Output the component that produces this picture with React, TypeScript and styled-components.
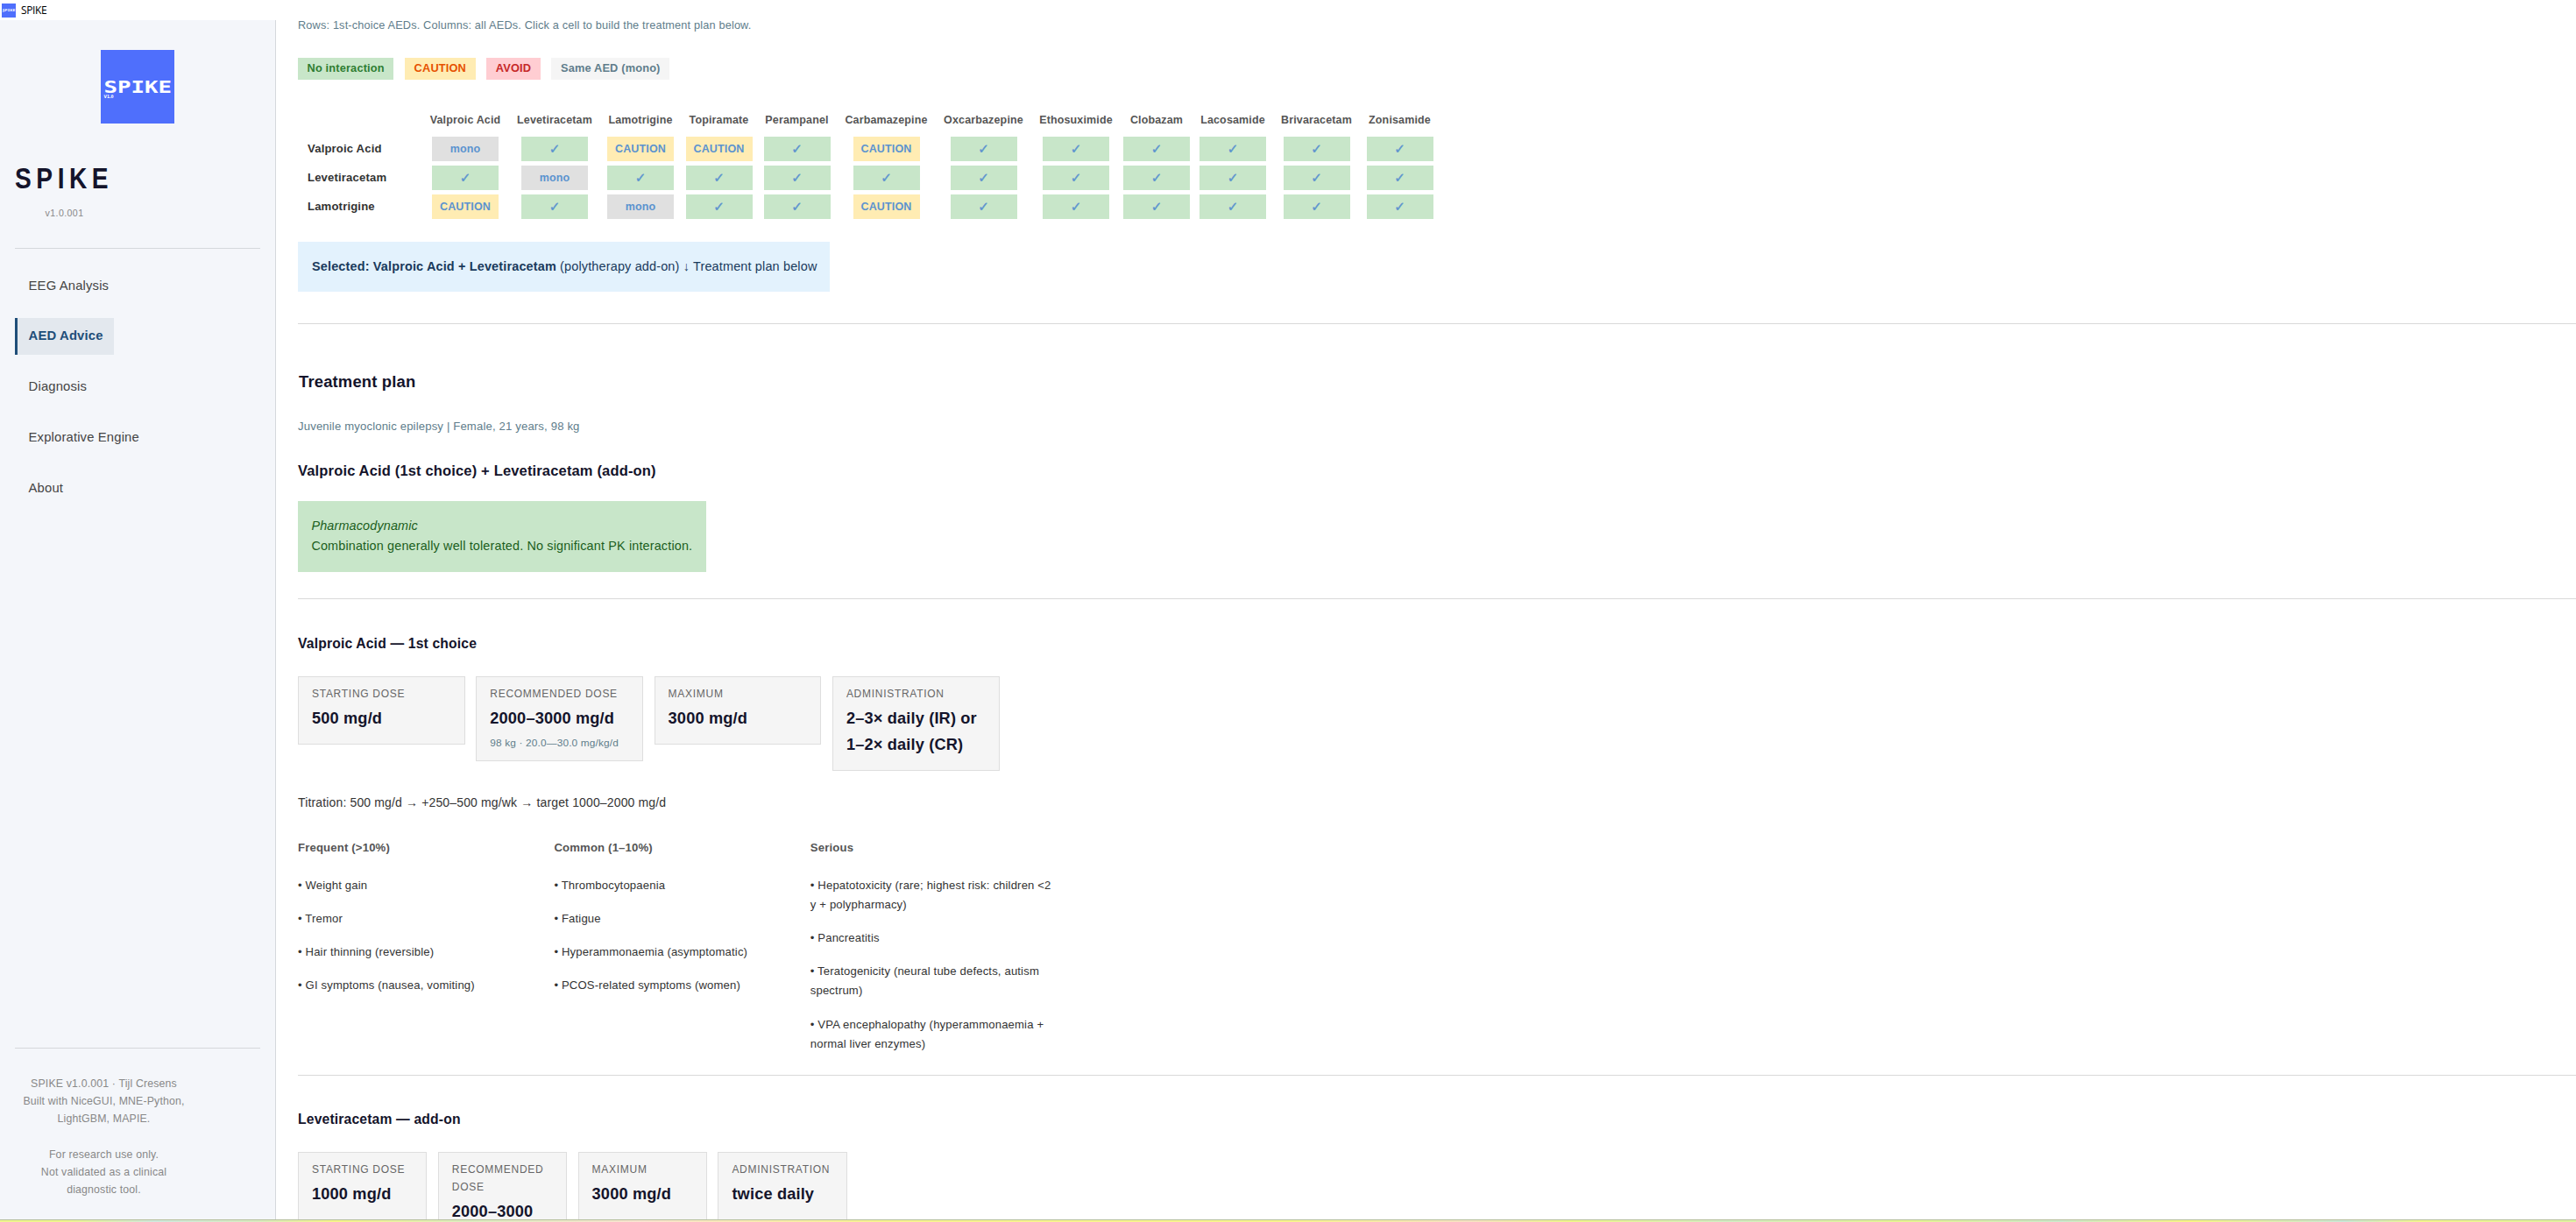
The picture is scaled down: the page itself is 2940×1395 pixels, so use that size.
import styled, { createGlobalStyle, css } from "styled-components";

const COLORS = {
	ink: "#14142b",
	text: "#333333",
	muted: "#607d8b",
	grey: "#888888",
	line: "#d5d8dc",
	navy: "#1f4e79",
	link: "#5b93cf",
	sidebar: "#f4f6fa",
};

const TONES = {
	ok: { bg: "#c8e6c9", fg: "#2e7d32" },
	caution: { bg: "#ffecb3", fg: "#e65100" },
	avoid: { bg: "#ffcdd2", fg: "#c62828" },
	same: { bg: "#f5f5f5", fg: "#607d8b" },
	mono: { bg: "#e0e0e0", fg: "#607d8b" },
};

type Tone = keyof typeof TONES;

const GlobalStyle = createGlobalStyle`
	* {
		box-sizing: border-box;
	}

	body {
		margin: 0;
		background: #ffffff;
		color: ${COLORS.text};
		font-family: "Liberation Sans", Arial, sans-serif;
		font-size: 16px;
		letter-spacing: 0.16px;
	}
`;

const Window = styled.div`
	display: flex;
	flex-direction: column;
	height: 1395px;
	overflow: hidden;
`;

const TitleBar = styled.header`
	display: flex;
	align-items: center;
	gap: 6px;
	flex: none;
	height: 23px;
	padding-left: 2px;
	font-family: "Open Sans", "Noto Sans", sans-serif;
	font-size: 12px;
	letter-spacing: -0.4px;
	color: #000000;
`;

const Body = styled.div`
	display: flex;
	flex: none;
	height: 1369px;
	overflow: hidden;
`;

const BottomStrip = styled.div`
	flex: none;
	height: 3px;
	border-top: 1px solid #b5bf9c;
	background: linear-gradient(
		90deg,
		#eef58c 0%,
		#eef58c 2.5%,
		#cfe8dc 6%,
		#d8ebc0 10%,
		#f6f488 13%,
		#dcedc0 18%,
		#fae3d0 25%,
		#f7f290 34%,
		#f8f48c 50%,
		#f6e0c4 57%,
		#eef58a 61%,
		#d2ecc4 67%,
		#e6f490 74%,
		#cbe8cd 80%,
		#f8f484 85%,
		#c9e7d6 91%,
		#f3f58c 94%,
		#dff2a0 100%
	);
`;

const Sidebar = styled.aside`
	display: flex;
	flex-direction: column;
	flex: none;
	width: 315px;
	padding: 34px 17px 0;
	background: ${COLORS.sidebar};
	border-right: 1px solid ${COLORS.line};
`;

const LogoWrap = styled.div`
	align-self: center;
	width: 84px;
	height: 84px;
`;

const Brand = styled.div`
	width: 130px;
	margin-top: 44px;
	height: 38px;
	line-height: 38px;
	font-size: 33.5px;
	font-weight: 700;
	letter-spacing: 6.6px;
	color: ${COLORS.ink};
	transform: scaleX(0.84);
	transform-origin: left;
`;

const Version = styled.div`
	width: 112px;
	margin-top: 10px;
	padding-left: 1px;
	line-height: 20px;
	font-size: 10.6px;
	letter-spacing: 0.4px;
	text-align: center;
	color: ${COLORS.grey};
`;

const SideRule = styled.div`
	height: 1px;
	background: ${COLORS.line};
`;

const VersionRule = styled(SideRule)`
	margin-top: 30px;
`;

const Nav = styled.nav`
	display: flex;
	flex-direction: column;
	align-items: flex-start;
	flex: 1;
	gap: 16px;
	margin-top: 21.5px;
`;

const NavItem = styled.a<{ $active?: boolean }>`
	padding: 8px 12.8px 8px 12.6px;
	border-left: 3px solid transparent;
	line-height: 25.8px;
	font-size: 14.8px;
	color: #444444;

	${({ $active }) =>
		$active &&
		css`
			border-left-color: ${COLORS.navy};
			background: #e3e8ee;
			color: ${COLORS.navy};
			font-weight: 700;
		`}
`;

const Footer = styled.div`
	width: 203px;
	padding-top: 29.5px;
	height: 195px;
	line-height: 20.33px;
	font-size: 12.32px;
	text-align: center;
	color: ${COLORS.grey};
`;

const Main = styled.main`
	flex: 1;
	padding-left: 25px;
	margin-top: -5px;
`;

const Caption = styled.p<{ $size?: number }>`
	margin: 0;
	line-height: 22px;
	font-size: ${({ $size }) => $size ?? 12.74}px;
	color: ${COLORS.muted};
`;

const Legend = styled.div`
	display: flex;
	gap: 12.8px;
	margin: 26px 0 28px;
`;

const LegendChip = styled.span<{ $tone: Tone }>`
	height: 25px;
	padding: 0 10.5px;
	line-height: 24px;
	font-size: 12.8px;
	font-weight: 700;
	background: ${({ $tone }) => TONES[$tone].bg};
	color: ${({ $tone }) => TONES[$tone].fg};
`;

const Matrix = styled.div`
	display: grid;
	grid-template-columns: 141px 100px 104px 92px 87px 91px 113px 109px 102px 82px 92px 99px 91px;
	grid-template-rows: 32px repeat(3, 28px);
	align-items: center;
	row-gap: 5px;
	margin-bottom: 26px;
`;

const ColHead = styled.div`
	padding-top: 4px;
	text-align: center;
	white-space: nowrap;
	font-size: 12.48px;
	font-weight: 700;
	color: #555555;
`;

const RowHead = styled.div`
	padding: 0 0 1px 11px;
	font-size: 13.12px;
	font-weight: 700;
	color: ${COLORS.text};
`;

const Cell = styled.div<{ $tone: Tone }>`
	display: flex;
	align-items: center;
	justify-content: center;
	justify-self: center;
	width: 76px;
	height: 28px;
	padding-bottom: 1px;
	font-size: 12.5px;
	font-weight: 700;
	background: ${({ $tone }) => TONES[$tone].bg};
	color: ${COLORS.link};
`;

const Check = styled.span`
	padding-top: 2px;
	font-family: "DejaVu Sans", sans-serif;
	font-size: 15px;
	line-height: 1;
	-webkit-text-stroke: 0.4px ${COLORS.link};
`;

const Selected = styled.div`
	width: 607px;
	height: 57px;
	padding-left: 16px;
	line-height: 56px;
	white-space: nowrap;
	font-size: 14.44px;
	background: #e3f2fd;
	color: #1a3a5c;
`;

const Rule = styled.div<{ $top: number; $bottom: number }>`
	height: 1px;
	margin: ${({ $top, $bottom }) => `${$top}px 0 ${$bottom}px`};
	background: #d9d9d9;
`;

const PageTitle = styled.h2`
	margin: 0 0 24px 1px;
	line-height: 32px;
	font-size: 18.45px;
	font-weight: 700;
	color: ${COLORS.ink};
`;

const ComboTitle = styled.h3`
	margin: 25px 0 21px;
	line-height: 28px;
	font-size: 16.5px;
	font-weight: 700;
	color: ${COLORS.ink};
`;

const Interaction = styled.div`
	width: 466px;
	height: 81px;
	padding: 16.5px 15.4px;
	line-height: 23px;
	white-space: nowrap;
	font-size: 14.4px;
	background: ${TONES.ok.bg};
	color: #1b5e20;
`;

const DrugTitle = styled.h4`
	margin: 0;
	line-height: 26px;
	font-size: 15.7px;
	font-weight: 700;
	color: ${COLORS.ink};
`;

const DoseRow = styled.div<{ $cardWidth: number }>`
	display: grid;
	grid-template-columns: repeat(4, ${({ $cardWidth }) => $cardWidth}px);
	align-items: start;
	gap: 12.5px;
	padding-top: 24px;
`;

const DoseCard = styled.div`
	padding: 9px 15px 10.2px;
	border: 1px solid #dedede;
	background: #f5f5f5;
`;

const DoseLabel = styled.div`
	line-height: 20px;
	font-size: 12px;
	letter-spacing: 0.72px;
	text-transform: uppercase;
	color: #666666;
`;

const DoseValue = styled.div`
	margin: 3.2px 0;
	line-height: 30px;
	font-size: 18.2px;
	font-weight: 700;
	color: ${COLORS.ink};
`;

const DoseNote = styled.div`
	margin-top: -0.6px;
	line-height: 20.2px;
	white-space: nowrap;
	font-size: 11.84px;
	color: ${COLORS.muted};
`;

const Titration = styled.p`
	margin: 24px 0 29px;
	line-height: 24px;
	font-size: 13.98px;
	color: ${COLORS.text};
`;

const Effects = styled.div`
	display: grid;
	grid-template-columns: repeat(3, 279.6px);
	gap: 12.8px;
`;

const EffectColumn = styled.div`
	display: flex;
	flex-direction: column;
	gap: 16.1px;
`;

const EffectHead = styled.div`
	margin-bottom: 4.6px;
	line-height: 22.1px;
	font-size: 13.15px;
	font-weight: 700;
	color: #555555;
`;

const Effect = styled.div`
	line-height: 22.1px;
	font-size: 13.1px;
	color: ${COLORS.text};
`;

// fixed height so the titration line does not depend on the tallest card
const DoseBlock = styled.div`
	height: 132px;
`;

const EffectBlock = styled.div`
	height: 234.5px;
`;

const NAV = ["EEG Analysis", "AED Advice", "Diagnosis", "Explorative Engine", "About"];

const DRUGS = [
	"Valproic Acid",
	"Levetiracetam",
	"Lamotrigine",
	"Topiramate",
	"Perampanel",
	"Carbamazepine",
	"Oxcarbazepine",
	"Ethosuximide",
	"Clobazam",
	"Lacosamide",
	"Brivaracetam",
	"Zonisamide",
];

// pairs that need caution, keyed by row
const CAUTIONS: Record<string, string[]> = {
	"Valproic Acid": ["Lamotrigine", "Topiramate", "Carbamazepine"],
	Levetiracetam: [],
	Lamotrigine: ["Valproic Acid", "Carbamazepine"],
};

const LEGEND: { tone: Tone; label: string }[] = [
	{ tone: "ok", label: "No interaction" },
	{ tone: "caution", label: "CAUTION" },
	{ tone: "avoid", label: "AVOID" },
	{ tone: "same", label: "Same AED (mono)" },
];

const VPA_DOSES = [
	{ label: "Starting dose", value: "500 mg/d" },
	{ label: "Recommended dose", value: "2000–3000 mg/d", note: "98 kg · 20.0—30.0 mg/kg/d" },
	{ label: "Maximum", value: "3000 mg/d" },
	{ label: "Administration", value: "2–3× daily (IR) or 1–2× daily (CR)" },
];

const LEV_DOSES = [
	{ label: "Starting dose", value: "1000 mg/d" },
	{ label: "Recommended dose", value: "2000–3000 mg/d" },
	{ label: "Maximum", value: "3000 mg/d" },
	{ label: "Administration", value: "twice daily" },
];

const EFFECTS = [
	{
		title: "Frequent (>10%)",
		items: ["Weight gain", "Tremor", "Hair thinning (reversible)", "GI symptoms (nausea, vomiting)"],
	},
	{
		title: "Common (1–10%)",
		items: [
			"Thrombocytopaenia",
			"Fatigue",
			"Hyperammonaemia (asymptomatic)",
			"PCOS-related symptoms (women)",
		],
	},
	{
		title: "Serious",
		items: [
			"Hepatotoxicity (rare; highest risk: children <2 y + polypharmacy)",
			"Pancreatitis",
			"Teratogenicity (neural tube defects, autism spectrum)",
			"VPA encephalopathy (hyperammonaemia + normal liver enzymes)",
		],
	},
];

function Logo({ size }: { size: number }) {
	return (
		<svg width={size} height={size} viewBox="0 0 84 84">
			<rect width="84" height="84" fill="#4f6ffc" />
			<text
				x="3.5"
				y="49"
				fill="#ffffff"
				fontFamily="DejaVu Sans Mono, monospace"
				fontWeight="700"
				fontSize="19.4"
				letterSpacing="0"
				textLength="77.5"
				lengthAdjust="spacingAndGlyphs"
			>
				SPIKE
			</text>
			<text
				x="3.6"
				y="54.6"
				fill="#ffffff"
				fontFamily="DejaVu Sans, sans-serif"
				fontWeight="700"
				fontSize="5"
				letterSpacing="0"
				textLength="11"
				lengthAdjust="spacingAndGlyphs"
			>
				V1.0
			</text>
		</svg>
	);
}

function toneFor(row: string, col: string): Tone {
	if (row === col) return "mono";
	return CAUTIONS[row].includes(col) ? "caution" : "ok";
}

function InteractionMatrix() {
	return (
		<Matrix>
			<span />
			{DRUGS.map((drug) => (
				<ColHead key={drug}>{drug}</ColHead>
			))}
			{Object.keys(CAUTIONS).map((row) => [
				<RowHead key={row}>{row}</RowHead>,
				...DRUGS.map((col) => {
					const tone = toneFor(row, col);
					return (
						<Cell key={`${row}-${col}`} $tone={tone}>
							{tone === "mono" && "mono"}
							{tone === "caution" && "CAUTION"}
							{tone === "ok" && <Check>✓</Check>}
						</Cell>
					);
				}),
			])}
		</Matrix>
	);
}

function Doses({
	items,
	cardWidth,
}: {
	items: { label: string; value: string; note?: string }[];
	cardWidth: number;
}) {
	return (
		<DoseRow $cardWidth={cardWidth}>
			{items.map(({ label, value, note }) => (
				<DoseCard key={label}>
					<DoseLabel>{label}</DoseLabel>
					<DoseValue>{value}</DoseValue>
					{note && <DoseNote>{note}</DoseNote>}
				</DoseCard>
			))}
		</DoseRow>
	);
}

export default function App() {
	return (
		<Window>
			<GlobalStyle />
			<TitleBar>
				<Logo size={16} />
				SPIKE
			</TitleBar>
			<Body>
				<Sidebar>
					<LogoWrap>
						<Logo size={84} />
					</LogoWrap>
					<Brand>SPIKE</Brand>
					<Version>v1.0.001</Version>
					<VersionRule />
					<Nav>
						{NAV.map((item) => (
							<NavItem key={item} $active={item === "AED Advice"}>
								{item}
							</NavItem>
						))}
					</Nav>
					<SideRule />
					<Footer>
						SPIKE v1.0.001 · Tijl Cresens
						<br />
						Built with NiceGUI, MNE-Python,
						<br />
						LightGBM, MAPIE.
						<br />
						<br />
						For research use only.
						<br />
						Not validated as a clinical
						<br />
						diagnostic tool.
					</Footer>
				</Sidebar>
				<Main>
					<Caption>
						Rows: 1st-choice AEDs. Columns: all AEDs. Click a cell to build the treatment plan below.
					</Caption>
					<Legend>
						{LEGEND.map(({ tone, label }) => (
							<LegendChip key={tone} $tone={tone}>
								{label}
							</LegendChip>
						))}
					</Legend>
					<InteractionMatrix />
					<Selected>
						<b>Selected: Valproic Acid + Levetiracetam</b> (polytherapy add-on) ↓ Treatment plan below
					</Selected>
					<Rule $top={36} $bottom={50} />
					<PageTitle>Treatment plan</PageTitle>
					<Caption $size={13.12}>Juvenile myoclonic epilepsy | Female, 21 years, 98 kg</Caption>
					<ComboTitle>Valproic Acid (1st choice) + Levetiracetam (add-on)</ComboTitle>
					<Interaction>
						<em>Pharmacodynamic</em>
						<br />
						Combination generally well tolerated. No significant PK interaction.
					</Interaction>
					<Rule $top={30} $bottom={38} />
					<DrugTitle>Valproic Acid — 1st choice</DrugTitle>
					<DoseBlock>
						<Doses items={VPA_DOSES} cardWidth={190.8} />
					</DoseBlock>
					<Titration>Titration: 500 mg/d → +250–500 mg/wk → target 1000–2000 mg/d</Titration>
					<EffectBlock>
						<Effects>
							{EFFECTS.map(({ title, items }) => (
								<EffectColumn key={title}>
									<EffectHead>{title}</EffectHead>
									{items.map((item) => (
										<Effect key={item}>{`• ${item}`}</Effect>
									))}
								</EffectColumn>
							))}
						</Effects>
					</EffectBlock>
					<Rule $top={35.5} $bottom={37} />
					<DrugTitle>Levetiracetam — add-on</DrugTitle>
					<Doses items={LEV_DOSES} cardWidth={147.3} />
				</Main>
			</Body>
			<BottomStrip />
		</Window>
	);
}
